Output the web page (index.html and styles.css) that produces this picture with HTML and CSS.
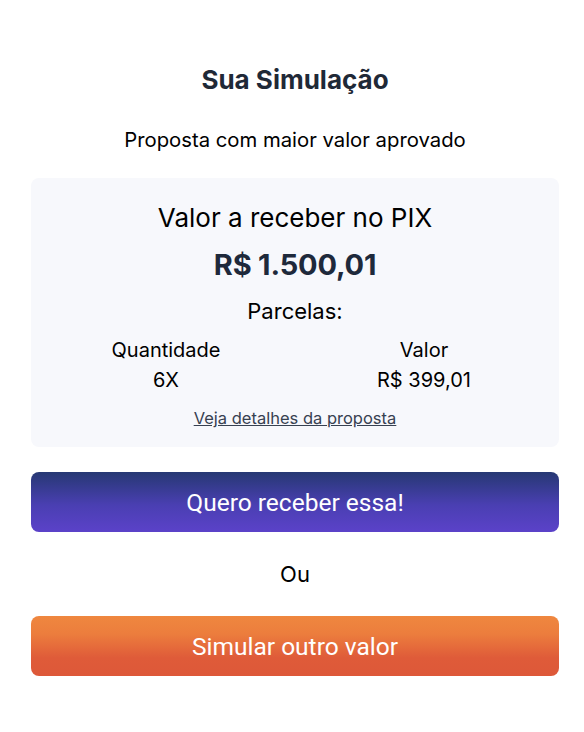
FILE: index.html
```html
<!DOCTYPE html>
<html lang="pt-BR">
<head>
    <meta charset="UTF-8">
    <link rel="stylesheet" href="styles.css">
    <meta name="viewport" content="width=device-width, initial-scale=1.0">
    <title>Sua Simulação</title>
</head>
<body>
    <div class="container">
        <h2 class="title">Sua Simulação</h2>
        <p class="subtitle">Proposta com maior valor aprovado</p>
        <div class="card">
            <h3 class="card-label">Valor a receber no PIX</h3>
            <div class="amount">R$ 1.500,01</div>
            <div class="parcelas">Parcelas:</div>
            <div class="cols">
                <div class="col">
                    <span>Quantidade</span>
                    <span>6X</span>
                </div>
                <div class="col">
                    <span>Valor</span>
                    <span>R$ 399,01</span>
                </div>
            </div>
            <a class="details" href="#">Veja detalhes da proposta</a>
        </div>
        <button class="btn btn-primary">Quero receber essa!</button>
        <p class="or">Ou</p>
        <button class="btn btn-secondary">Simular outro valor</button>
    </div>
</body>
</html>
```

FILE: styles.css
```css
body {
  margin: 0;
  background: #fff;
  font-family: Inter, "Noto Sans", sans-serif;
  color: #000;
}
.container {
  padding: 64px 25px 40px 31px;
  display: flex;
  flex-direction: column;
}
.title {
  margin: 0;
  text-align: center;
  font-size: 26px;
  line-height: 32px;
  font-weight: 700;
  color: #1f2937;
}
.subtitle {
  margin: 30px 0 24px;
  text-align: center;
  font-size: 20.3px;
  line-height: 28px;
}
.card {
  background: #f7f8fc;
  border-radius: 8px;
  padding: 24px 6px 19px;
  display: flex;
  flex-direction: column;
  align-items: center;
}
.card-label {
  margin: 0;
  font-size: 26px;
  line-height: 32px;
  font-weight: 400;
}
.amount {
  margin-top: 13px;
  font-size: 29px;
  line-height: 36px;
  font-weight: 700;
  color: #1e293b;
  letter-spacing: -0.2px;
}
.parcelas {
  margin-top: 14px;
  font-size: 22px;
  line-height: 28px;
}
.cols {
  margin-top: 10px;
  align-self: stretch;
  display: grid;
  grid-template-columns: 1fr 1fr;
}
.col {
  display: flex;
  flex-direction: column;
  align-items: center;
  font-size: 20px;
  line-height: 30px;
}
.details {
  margin-top: 13px;
  font-size: 16.5px;
  line-height: 20px;
  color: #374151;
}
.btn {
  width: 100%;
  height: 60px;
  border: none;
  border-radius: 8px;
  color: #fff;
  font-family: Roboto, sans-serif;
  font-size: 24.5px;
  cursor: pointer;
}
.btn-primary {
  margin-top: 25px;
  background: linear-gradient(to bottom, #263873 0%, #4a3fb2 55%, #5b42c9 100%);
}
.btn-secondary {
  background: linear-gradient(to bottom, #ef873f 0%, #ec7d3d 30%, #df5b39 70%, #dd5839 100%);
}
.or {
  margin: 28px 0;
  text-align: center;
  font-size: 22px;
  line-height: 28px;
}
```
